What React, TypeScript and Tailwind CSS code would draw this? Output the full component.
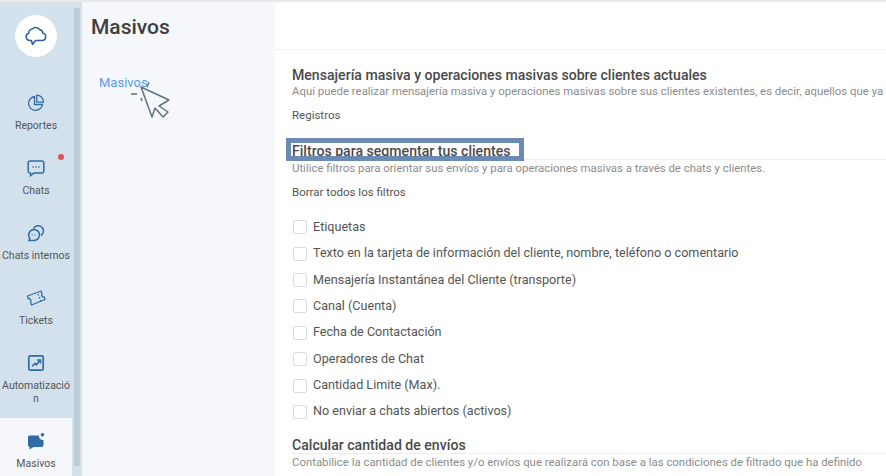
import React from 'react';

const navItems = [
  { label: 'Reportes', icon: 'reports', rowClass: 'h-[65px] pt-[14px]' },
  { label: 'Chats', icon: 'chats', dot: true, rowClass: 'h-[65px] pt-[14px]' },
  { label: 'Chats internos', icon: 'internal', rowClass: 'h-[65px] pt-[14px]' },
  { label: 'Tickets', icon: 'tickets', rowClass: 'h-[65px] pt-[14px]' },
  { label: 'Automatización', icon: 'auto', rowClass: 'h-[79px] pt-[14px]' },
  { label: 'Masivos', icon: 'bulk', active: true, rowClass: 'h-[60px] pt-[13px]' },
];

const filters = [
  'Etiquetas',
  'Texto en la tarjeta de información del cliente, nombre, teléfono o comentario',
  'Mensajería Instantánea del Cliente (transporte)',
  'Canal (Cuenta)',
  'Fecha de Contactación',
  'Operadores de Chat',
  'Cantidad Limite (Max).',
  'No enviar a chats abiertos (activos)',
];

const NavIcon = ({ name }: { name: string }) => {
  const cls = 'w-[20px] h-[20px] text-[#2f6ca6]';
  if (name === 'reports') {
    return (
      <svg viewBox="0 0 20 20" className={cls} fill="none" stroke="currentColor" strokeWidth="1.3">
        <path d="M8.500 3.500a7 7 0 1 0 8 8h-8z" />
        <path d="M10.800 2.200a6.800 6.800 0 0 1 6.700 7h-6.700z" />
      </svg>
    );
  }
  if (name === 'chats') {
    return (
      <svg viewBox="0 0 20 20" className={cls} fill="none" stroke="currentColor" strokeWidth="1.5">
        <path d="M4 3h12a1.800 1.800 0 0 1 1.800 1.800v8.400A1.800 1.800 0 0 1 16 15H8l-3.500 2.700V15H4a1.800 1.800 0 0 1-1.800-1.800V4.800A1.800 1.800 0 0 1 4 3z" />
        <path d="M6.500 9h1.200M9.400 9h1.200M12.300 9h1.200" />
      </svg>
    );
  }
  if (name === 'internal') {
    return (
      <svg viewBox="0 0 20 20" className={cls} fill="none" stroke="currentColor" strokeWidth="1.5">
        <path d="M7.500 5.500a5.300 5.300 0 1 1 7.500 7" />
        <path d="M8 6.500a5.500 5.500 0 0 1 0 11H3l.8-2.200A5.500 5.500 0 0 1 8 6.500z" />
        <path d="M5.700 12h.8M8.500 12h.8" />
      </svg>
    );
  }
  if (name === 'tickets') {
    return (
      <svg viewBox="0 0 20 20" className={cls} fill="none" stroke="currentColor" strokeWidth="1.3">
        <path d="M1.500 8L15 3l1 3a2 2 0 0 0 2.200 3l.8 2.500L5.500 17l-1-3a2 2 0 0 0-2.200-3.200z" />
        <path d="M12 6l.6 1.500M13.200 9l.6 1.500M14.300 12l.4 1.200" />
      </svg>
    );
  }
  if (name === 'auto') {
    return (
      <svg viewBox="0 0 20 20" className={cls} fill="none" stroke="currentColor" strokeWidth="1.700">
        <rect x="2.800" y="2.800" width="14.400" height="14.400" rx="1.500" />
        <path d="M6 13.500l3-3 1.300 1.300L14 7.500M11 7h3.500v3.500" strokeWidth="1.600" />
      </svg>
    );
  }
  return (
    <svg viewBox="0 0 20 20" className={cls} fill="currentColor">
      <path d="M3.500 4.500h9.300a5 5 0 0 0 4.700 4.700v4.800a2 2 0 0 1-2 2H7.500L3.500 18.500v-2.600A2 2 0 0 1 2 14V6a1.500 1.500 0 0 1 1.500-1.500z" />
      <circle cx="16.500" cy="3.800" r="1.800" />
    </svg>
  );
};

const App = () => {
  return (
    <div className="flex w-[886px] h-[476px] overflow-hidden bg-white text-[11.5px] text-[#555] font-['Roboto','Liberation_Sans',sans-serif] border-t-2 border-[#e8e8e8]">
      {/* Sidebar */}
      <div className="flex w-[82px] shrink-0 bg-[#d2e1ec]">
        <div className="w-[72px] flex flex-col items-center">
          <div className="mt-[13px] mb-[22px] w-[42px] h-[42px] shrink-0 rounded-full bg-white flex items-center justify-center">
            <svg viewBox="0 0 24 24" className="w-[24px] h-[24px] text-[#2c5f96]" fill="none" stroke="currentColor" strokeWidth="1.500" strokeLinejoin="round">
              <path d="M7.500 16.500H6a3.700 3.700 0 0 1-1.300-7.200 3.800 3.800 0 0 1 3.500-4.300A4.600 4.600 0 0 1 15.500 5.500 3.800 3.800 0 0 1 18.700 9 3.800 3.800 0 0 1 18 16.500h-6.500L8.500 20.500z" />
            </svg>
          </div>
          {navItems.map((item) => (
            <div
              key={item.label}
              className={`relative w-full shrink-0 flex flex-col items-center text-center text-[10.5px] leading-[13px] ${item.rowClass} ${item.active ? 'bg-[#f5f7fa]' : ''}`}
            >
              <NavIcon name={item.icon} />
              <span className="mt-[6px] w-[72px] break-all">{item.label}</span>
              {item.dot && <span className="absolute top-[10px] right-[8px] w-[6px] h-[6px] rounded-full bg-[#e0524d]" />}
            </div>
          ))}
        </div>
        <div className="w-[6px] ml-[2px] mt-[6px] mb-[10px] bg-[#bccdd9]" />
      </div>

      {/* Second column */}
      <div className="relative w-[193px] shrink-0 bg-[#f5f7fa] pl-[9px]">
        <h1 className="pt-[12px] text-[21px] leading-[26px] font-medium text-[#3f3f3f]">Masivos</h1>
        <div className="mt-[33px] ml-[8px] text-[13px] text-[#5b9bea]">Masivos</div>
        {/* cursor annotation */}
        <svg viewBox="0 0 42 42" className="absolute left-[48px] top-[78px] w-[42px] h-[42px] text-[#5f7480]" fill="none" stroke="currentColor" strokeWidth="1.500" strokeLinejoin="round">
          <path d="M11 7l28 13-10 6 9 6-5 5-8-9-3 9z" />
          <path d="M1 14h6M17 7l2-5M11 18l1 3" />
        </svg>
      </div>

      {/* Main */}
      <div className="flex-1 min-w-0 bg-white overflow-hidden">
        <div className="h-[48px] border-b border-[#eeeeee]" />
        <div className="relative pl-[17px] pt-[17px] whitespace-nowrap">
          <h2 className="text-[14.1px] leading-[17px] font-medium text-[#4a4a4a]">Mensajería masiva y operaciones masivas sobre clientes actuales</h2>
          <p className="text-[11.4px] leading-[15px] text-[#8c8c8c]">Aquí puede realizar mensajería masiva y operaciones masivas sobre sus clientes existentes, es decir, aquellos que ya</p>
          <p className="mt-[9px] leading-[15px]">Registros</p>

          <h2 className="mt-[20px] mb-[1px] text-[14.1px] leading-[16px] font-medium text-[#4a4a4a] border-b border-[#eeeeee]">Filtros para segmentar tus clientes</h2>
          <p className="text-[11.4px] leading-[15px] text-[#8c8c8c]">Utilice filtros para orientar sus envíos y para operaciones masivas a través de chats y clientes.</p>
          <p className="mt-[9px] leading-[15px]">Borrar todos los filtros</p>

          <div className="absolute left-[11px] top-[88px] w-[238px] h-[23px] border-[5px] border-[#6b8bb5]" />

          <div className="mt-[14px] flex flex-col text-[12.6px]">
            {filters.map((f) => (
              <label key={f} className="flex items-center gap-[6px] h-[26.4px] pl-[1px]">
                <span className="w-[14px] h-[14px] rounded-[2px] border border-[#dcdcdc] bg-white shrink-0" />
                <span>{f}</span>
              </label>
            ))}
          </div>

          <h2 className="mt-[12px] mb-[1px] text-[14.1px] leading-[16px] font-medium text-[#4a4a4a] border-b border-[#eeeeee]">Calcular cantidad de envíos</h2>
          <p className="text-[11.4px] leading-[15px] text-[#8c8c8c]">Contabilice la cantidad de clientes y/o envíos que realizará con base a las condiciones de filtrado que ha definido</p>
        </div>
      </div>
    </div>
  );
};

export default App;
